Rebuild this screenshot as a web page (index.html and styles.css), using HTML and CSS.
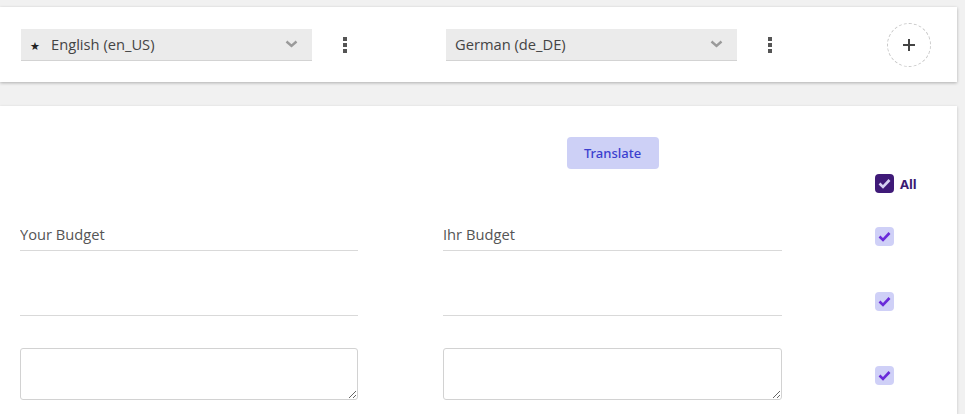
FILE: index.html
```html
<!DOCTYPE html>
<html lang="en">
<head>
<meta charset="UTF-8">
<meta name="viewport" content="width=device-width, initial-scale=1.0">
<title>Translations</title>
<link rel="stylesheet" href="styles.css">
</head>
<body>
    <div class="page">
        <!-- Barre des langues -->
        <div class="lang-bar">
            <div class="lang-col">
                <div class="lang-select">
                    <span class="star">&#9733;</span>
                    <span class="lang-name">English (en_US)</span>
                    <svg class="chevron" width="13" height="8" viewBox="0 0 13 8"><polyline points="1.5,1.5 6.5,6 11.5,1.5" fill="none" stroke="#9a9a9a" stroke-width="2.4"/></svg>
                </div>
                <span class="kebab"><i></i><i></i><i></i></span>
            </div>
            <div class="lang-col">
                <div class="lang-select">
                    <span class="lang-name">German (de_DE)</span>
                    <svg class="chevron" width="13" height="8" viewBox="0 0 13 8"><polyline points="1.5,1.5 6.5,6 11.5,1.5" fill="none" stroke="#9a9a9a" stroke-width="2.4"/></svg>
                </div>
                <span class="kebab"><i></i><i></i><i></i></span>
            </div>
            <div class="add-lang">
                <svg width="14" height="14" viewBox="0 0 14 14"><path d="M7 1v12M1 7h12" stroke="#444" stroke-width="2"/></svg>
            </div>
        </div>

        <!-- Champs -->
        <div class="fields">
            <div class="grid">
                <div></div>
                <div class="center"><button class="translate">Translate</button></div>
                <div></div>
            </div>
            <div class="grid all-row">
                <div></div>
                <div></div>
                <label class="all">
                    <span class="check dark"><svg width="13" height="11" viewBox="0 0 13 11"><polyline points="1.5,5.5 5,9 11.5,2" fill="none" stroke="#d6d0f2" stroke-width="2.6"/></svg></span>
                    All
                </label>
            </div>
            <div class="grid row first">
                <input class="field" type="text" value="Your Budget">
                <input class="field" type="text" value="Ihr Budget">
                <span class="check"><svg width="13" height="11" viewBox="0 0 13 11"><polyline points="1.5,5.5 5,9 11.5,2" fill="none" stroke="#6a2bd9" stroke-width="2.6"/></svg></span>
            </div>
            <div class="grid row">
                <input class="field" type="text" value="">
                <input class="field" type="text" value="">
                <span class="check"><svg width="13" height="11" viewBox="0 0 13 11"><polyline points="1.5,5.5 5,9 11.5,2" fill="none" stroke="#6a2bd9" stroke-width="2.6"/></svg></span>
            </div>
            <div class="grid row">
                <textarea class="area"></textarea>
                <textarea class="area"></textarea>
                <span class="check"><svg width="13" height="11" viewBox="0 0 13 11"><polyline points="1.5,5.5 5,9 11.5,2" fill="none" stroke="#6a2bd9" stroke-width="2.6"/></svg></span>
            </div>
        </div>
    </div>
</body>
</html>
```
FILE: styles.css
```css
/* Styles généraux */
body {
    margin: 0;
    padding: 0;
    background: #f1f1f1;
    font-family: "Open Sans", Arial, sans-serif;
    overflow: hidden;
}
.page {
    width: 957px;
    padding-top: 7px;
}

/* Barre des langues */
.lang-bar {
    height: 75px;
    background: #fff;
    box-shadow: 0 1px 3px rgba(0, 0, 0, 0.28);
    display: flex;
    align-items: center;
    padding-left: 21px;
}
.lang-col {
    width: 425px;
    display: flex;
    align-items: center;
}
.lang-select {
    width: 291px;
    height: 32px;
    background: #ebebeb;
    border-bottom: 1px solid #d3d3d3;
    display: flex;
    align-items: center;
    padding: 0 14px 0 9px;
    box-sizing: border-box;
    font-size: 14.7px;
    color: #444;
}
.star {
    font-size: 11px;
    color: #222;
    margin-right: 11px;
    margin-top: 2px;
}
.lang-name {
    flex: 1;
}
.kebab {
    display: flex;
    flex-direction: column;
    gap: 2px;
    margin-left: 31px;
}
.kebab i {
    width: 4px;
    height: 4px;
    background: #555;
}
.add-lang {
    width: 42px;
    height: 42px;
    border: 1px dashed #c8c8c8;
    border-radius: 50%;
    display: flex;
    align-items: center;
    justify-content: center;
    margin-left: 16px;
}

/* Champs */
.fields {
    margin-top: 24px;
    background: #fff;
    box-shadow: 0 1px 3px rgba(0, 0, 0, 0.2);
    padding: 31px 0 0 20px;
    height: 308px;
    box-sizing: border-box;
}
.grid {
    display: grid;
    grid-template-columns: 338px 339px 19px;
    column-gap: 85px;
}
.grid > :nth-child(3) {
    margin-left: 8px;
}
.center {
    display: flex;
    justify-content: center;
}
.translate {
    width: 92px;
    height: 32px;
    border: none;
    border-radius: 4px;
    background: #cdd0f6;
    color: #3b3fcf;
    font-family: "Noto Sans", sans-serif;
    font-size: 13px;
    font-weight: 500;
    padding: 0;
}
.all-row {
    margin-top: 5px;
}
.all {
    display: flex;
    align-items: center;
    gap: 6px;
    font-family: "Noto Sans", sans-serif;
    font-weight: 700;
    font-size: 13px;
    color: #3b1a72;
    white-space: nowrap;
}
.check {
    width: 19px;
    height: 19px;
    border-radius: 4px;
    background: #cfd0f7;
    display: flex;
    align-items: center;
    justify-content: center;
    flex-shrink: 0;
}
.check.dark {
    background: #3f1a78;
}
.row {
    align-items: center;
    margin-top: 32px;
}
.row.first {
    margin-top: 25px;
}
.row .check {
    margin-top: 3px;
}
.field {
    height: 33px;
    border: none;
    border-bottom: 1px solid #d9d9d9;
    padding: 0;
    font-family: "Open Sans", sans-serif;
    font-size: 14.7px;
    color: #555;
    outline: none;
    box-sizing: border-box;
    width: 100%;
}
.area {
    height: 52px;
    border: 1px solid #d2d2d2;
    border-radius: 3px;
    box-sizing: border-box;
    width: 100%;
    resize: vertical;
    margin: 0;
}
```
